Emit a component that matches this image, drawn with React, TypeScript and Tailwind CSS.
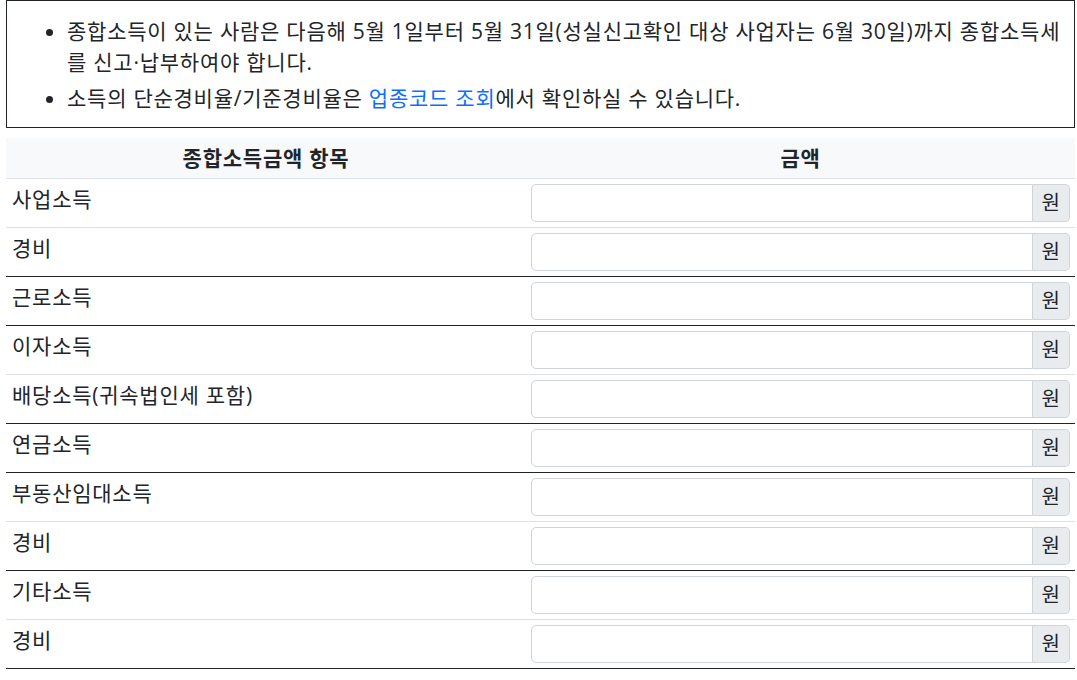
import React from 'react';

const FONT = { fontFamily: '"Open Sans", "Noto Sans CJK KR", sans-serif' };

interface IncomeRow {
  label: string;
  groupEnd: boolean;
}

const rows: IncomeRow[] = [
  { label: '사업소득', groupEnd: false },
  { label: '경비', groupEnd: true },
  { label: '근로소득', groupEnd: true },
  { label: '이자소득', groupEnd: false },
  { label: '배당소득(귀속법인세 포함)', groupEnd: true },
  { label: '연금소득', groupEnd: true },
  { label: '부동산임대소득', groupEnd: false },
  { label: '경비', groupEnd: true },
  { label: '기타소득', groupEnd: false },
  { label: '경비', groupEnd: true },
];

function AmountInput() {
  return (
    <div className="flex h-[38px]">
      <input
        type="text"
        className="flex-1 min-w-0 border border-[#ced4da] rounded-l-[5px] bg-white px-3 text-[20px] outline-none"
      />
      <span className="flex items-center px-[9px] bg-[#e9ecef] border border-l-0 border-[#ced4da] rounded-r-[5px] text-[20px] tracking-normal text-[#212529]">
        원
      </span>
    </div>
  );
}

export default function App() {
  return (
    <div className="pl-[6px] pr-[2px] bg-white text-[#212529] text-[21px] tracking-[0.75px] leading-[30px]" style={FONT}>
      {/* Notice */}
      <div className="border border-[#212529] pt-[15px] pb-[13px] pl-[60px] pr-[10px]">
        <ul className="list-disc leading-[31px]">
          <li>
            종합소득이 있는 사람은 다음해 5월 1일부터 5월 31일(성실신고확인 대상 사업자는 6월 30일)까지 종합소득세를 신고·납부하여야 합니다.
          </li>
          <li className="mt-[5px]">
            소득의 단순경비율/기준경비율은 <a href="#" className="text-[#0d6efd]">업종코드 조회</a>에서 확인하실 수 있습니다.
          </li>
        </ul>
      </div>

      {/* Income table */}
      <table className="w-full mt-[10px] border-collapse">
        <thead>
          <tr className="bg-[#f8f9fa]">
            <th className="w-[520px] px-[6px] py-[5px] text-center font-bold border-b border-[#dee2e6]">종합소득금액 항목</th>
            <th className="px-[5px] py-[5px] text-center font-bold border-b border-[#dee2e6]">금액</th>
          </tr>
        </thead>
        <tbody>
          {rows.map((row, i) => {
            const line = row.groupEnd ? 'border-b border-[#212529]' : 'border-b border-[#dee2e6]';
            return (
              <tr key={i}>
                <td className={`px-[6px] py-[5px] align-top text-left ${line}`}>{row.label}</td>
                <td className={`px-[5px] py-[5px] align-top ${line}`}>
                  <AmountInput />
                </td>
              </tr>
            );
          })}
        </tbody>
      </table>
    </div>
  );
}
